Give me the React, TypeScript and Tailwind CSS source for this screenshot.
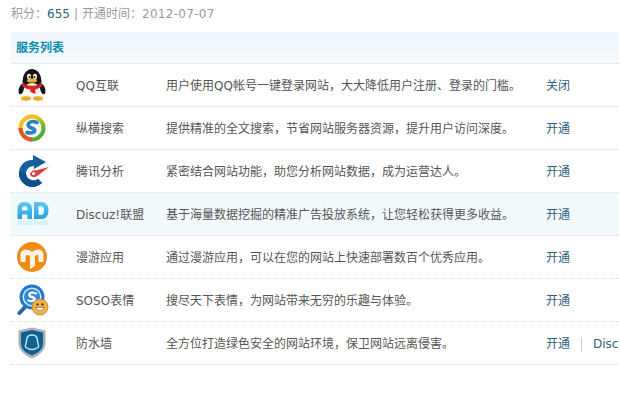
import React from "react";

const FONT = "font-['DejaVu_Sans','Noto_Sans_CJK_SC',sans-serif]";

function QQIcon() {
  return (
    <svg width="30" height="32" viewBox="0 0 30 32">
      <ellipse cx="15" cy="12" rx="9.5" ry="12" fill="#15151a" />
      <ellipse cx="4.5" cy="20" rx="2.6" ry="5.5" fill="#15151a" transform="rotate(18 4.5 20)" />
      <ellipse cx="25.5" cy="20" rx="2.6" ry="5.5" fill="#15151a" transform="rotate(-18 25.5 20)" />
      <ellipse cx="15" cy="22" rx="8.5" ry="8" fill="#f6f6f4" />
      <ellipse cx="12" cy="7.5" rx="2" ry="2.8" fill="#fff" />
      <ellipse cx="18" cy="7.5" rx="2" ry="2.8" fill="#fff" />
      <circle cx="12.5" cy="8" r="1" fill="#111" />
      <circle cx="17.5" cy="8" r="1" fill="#111" />
      <ellipse cx="15" cy="11.5" rx="5" ry="2" fill="#f3b31e" />
      <path d="M5.5 14 Q15 20 24.5 14 L25 17.5 Q20 20 18 20.5 L18.5 25 L13.5 23 L13.5 20.5 Q9 20 5 17.5 Z" fill="#d8231f" />
      <ellipse cx="9" cy="29.5" rx="5" ry="2.2" fill="#f2a91c" />
      <ellipse cx="21" cy="29.5" rx="5" ry="2.2" fill="#f2a91c" />
    </svg>
  );
}

function SosoIcon() {
  return (
    <svg width="30" height="30" viewBox="0 0 30 30">
      <defs>
        <linearGradient id="ring" x1="0" y1="0" x2="1" y2="1">
          <stop offset="0" stopColor="#f2c21a" />
          <stop offset="0.4" stopColor="#e9c31d" />
          <stop offset="0.7" stopColor="#6cb52d" />
          <stop offset="1" stopColor="#3f9e35" />
        </linearGradient>
      </defs>
      <circle cx="15" cy="15" r="11.5" fill="#f4f8fb" stroke="url(#ring)" strokeWidth="4" />
      <path d="M3.5 15 A11.5 11.5 0 0 0 15 26.5" fill="none" stroke="#e4572a" strokeWidth="4" />
      <path d="M20 9.5 Q14 7 11.5 10.5 Q10 13.5 14.5 15 Q18.5 16 17.5 18.5 Q15 21 10 19.5" fill="none" stroke="#2a7fc4" strokeWidth="3.6" strokeLinecap="round" />
    </svg>
  );
}

function AnalyticsIcon() {
  return (
    <svg width="32" height="32" viewBox="0 0 32 32">
      <path d="M16 5 A13 13 0 0 0 2 17.5 A13.5 13.5 0 0 0 25 28 L21 24 A7.5 7.5 0 0 1 9 17.5 A7.5 7.5 0 0 1 17 11 L17 14 L29 7 L16 0 L16 3 Z" fill="#14609f" />
      <path d="M2 17.5 A13.5 13.5 0 0 0 25 28 L21 24 A7.5 7.5 0 0 1 9 17.5 Z" fill="#0f4f8c" />
      <path d="M13 19.5 A4.4 4.4 0 0 1 18.5 15.5 L32 12 L20 21 A4.4 4.4 0 0 1 13 19.5 Z" fill="#e23d44" />
      <circle cx="16.5" cy="18.5" r="1.6" fill="#fff" />
    </svg>
  );
}

function AdIcon() {
  return (
    <svg width="32" height="30" viewBox="0 0 32 30">
      <defs>
        <linearGradient id="ad" x1="0" y1="0" x2="0" y2="1">
          <stop offset="0" stopColor="#57c9f3" />
          <stop offset="1" stopColor="#2aa2e0" />
        </linearGradient>
      </defs>
      <path d="M0.5 20 L0.5 10 Q0.5 3 7.5 3 Q15 3 15 10 L15 20 L10.5 20 L10.5 15.5 L5 15.5 L5 20 Z M5 11.5 L10.5 11.5 L10.5 10 Q10.5 7 7.8 7 Q5 7 5 10 Z" fill="url(#ad)" fillRule="evenodd" />
      <path d="M17 3 L24 3 Q31.5 3 31.5 11.5 Q31.5 20 24 20 L17 20 Z M21.5 7 L21.5 16 L23.5 16 Q27 16 27 11.5 Q27 7 23.5 7 Z" fill="url(#ad)" fillRule="evenodd" />
      <rect x="0.5" y="22" width="14.5" height="4" fill="#9fdcf5" opacity="0.3" />
      <rect x="17" y="22" width="14" height="4" fill="#9fdcf5" opacity="0.3" />
    </svg>
  );
}

function ManyouIcon() {
  return (
    <svg width="30" height="30" viewBox="0 0 30 30">
      <circle cx="15" cy="15" r="15" fill="#ef8a14" />
      <path d="M3.5 20 L3.5 13 Q3.5 7.5 9 7.5 Q12.5 7.5 15 10 Q17.5 7.5 21 7.5 Q26.5 7.5 26.5 13 L26.5 20 L21.5 20 L21.5 14 Q21 12.5 19.5 13 Q18 13.5 18 15 L18 24 L13 27 L13 15 Q13 13.5 11 13 Q8.5 12.5 8.5 14.5 L8.5 20 Z" fill="#fdf3e3" />
    </svg>
  );
}

function SosoFaceIcon() {
  return (
    <svg width="32" height="32" viewBox="0 0 32 32">
      <path d="M2.5 29 L9 22" stroke="#2568a8" strokeWidth="4" strokeLinecap="round" />
      <circle cx="15" cy="13" r="12.5" fill="#1f78cc" />
      <circle cx="15" cy="13" r="9.5" fill="#d9ecfa" />
      <circle cx="15" cy="13" r="8" fill="#2f8ad8" />
      <path d="M19 9.5 Q14 7.5 12.5 10 Q11.5 12.5 15 13 Q18.5 14 17.5 16 Q15.5 18 11.5 16.5" fill="none" stroke="#fff" strokeWidth="2.4" strokeLinecap="round" />
      <circle cx="23" cy="23" r="8" fill="#f0b349" stroke="#b97d2e" strokeWidth="0.8" />
      <circle cx="20.5" cy="20.5" r="1.2" fill="#5a3a12" />
      <circle cx="25.5" cy="20.5" r="1.2" fill="#5a3a12" />
      <path d="M18 23.5 Q23 29.5 28 23.5 Z" fill="#fff" stroke="#7a5215" strokeWidth="0.6" />
    </svg>
  );
}

function FirewallIcon() {
  return (
    <svg width="30" height="32" viewBox="0 0 30 32">
      <path d="M15 0.5 L28.5 3.5 L28.5 17 Q28 26 15 31.5 Q2 26 1.5 17 L1.5 3.5 Z" fill="#a9b0b8" />
      <path d="M15 3 L26 5.5 L26 17 Q25.5 24.5 15 28.5 Q4.5 24.5 4 17 L4 5.5 Z" fill="#11618f" />
      <path d="M15 8 Q9.5 8 9.5 14 Q9.5 16 8.5 18 Q8 21 10 21 Q12 22.5 15 22.5 Q18 22.5 20 21 Q22 21 21.5 18 Q20.5 16 20.5 14 Q20.5 8 15 8 Z" fill="none" stroke="#c4ecf8" strokeWidth="1.4" />
    </svg>
  );
}

const rows = [
  { icon: <QQIcon />, name: "QQ互联", desc: "用户使用QQ帐号一键登录网站，大大降低用户注册、登录的门槛。", action: "关闭" },
  { icon: <SosoIcon />, name: "纵横搜索", desc: "提供精准的全文搜索，节省网站服务器资源，提升用户访问深度。", action: "开通" },
  { icon: <AnalyticsIcon />, name: "腾讯分析", desc: "紧密结合网站功能，助您分析网站数据，成为运营达人。", action: "开通" },
  { icon: <AdIcon />, name: "Discuz!联盟", desc: "基于海量数据挖掘的精准广告投放系统，让您轻松获得更多收益。", action: "开通", hover: true },
  { icon: <ManyouIcon />, name: "漫游应用", desc: "通过漫游应用，可以在您的网站上快速部署数百个优秀应用。", action: "开通" },
  { icon: <SosoFaceIcon />, name: "SOSO表情", desc: "搜尽天下表情，为网站带来无穷的乐趣与体验。", action: "开通" },
  { icon: <FirewallIcon />, name: "防水墙", desc: "全方位打造绿色安全的网站环境，保卫网站远离侵害。", action: "开通", extra: "Disc" },
];

export default function App() {
  return (
    <div className={`h-[420px] w-[619px] overflow-hidden bg-white pl-[11px] text-[12px] text-[#555] ${FONT}`}>
      {/* Credit line */}
      <p className="h-[32px] pt-[5px] leading-[18px] text-[#999]">
        积分：<span className="text-[#2f6180]">655</span>
        <span className="mx-[4px]">|</span>
        开通时间：<span className="tracking-[0.3px]">2012-07-07</span>
      </p>

      {/* Service list */}
      <div className="w-[608px]">
        <div className="flex h-[32px] items-center border-b border-dotted border-[#d8dee4] bg-gradient-to-b from-[#eef6fc] to-[#f5fafd] pl-[5px] font-bold text-[#0b8eb0]">
          服务列表
        </div>
        {rows.map((row) => (
          <div
            key={row.name}
            className={`flex h-[43px] items-center border-b border-dotted border-[#d8dee4] ${row.hover ? "bg-[#f2f9fd]" : ""}`}
          >
            <div className="flex w-[65px] shrink-0 justify-start pl-[6px]">{row.icon}</div>
            <div className="w-[90px] shrink-0 pt-[2px]">{row.name}</div>
            <div className="w-[380px] shrink-0 whitespace-nowrap pt-[2px]">{row.desc}</div>
            <div className="flex items-center whitespace-nowrap pt-[2px] text-[#2f6180]">
              {row.action}
              {row.extra && (
                <>
                  <span className="mx-[11px] h-[13px] w-px bg-[#ccc]" />
                  {row.extra}
                </>
              )}
            </div>
          </div>
        ))}
      </div>
    </div>
  );
}
